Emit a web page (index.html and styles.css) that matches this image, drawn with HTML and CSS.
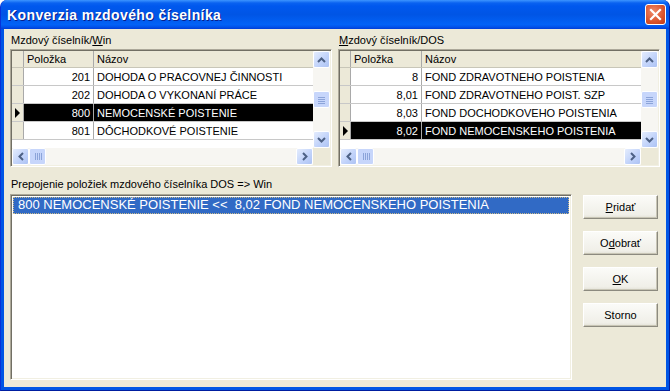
FILE: index.html
```html
<!DOCTYPE html>
<html>
<head>
    <meta charset="UTF-8">
    <title>Konverzia mzdového číselníka</title>
    <link rel="stylesheet" href="styles.css">
</head>
<body>
<div class="window">
    <div class="titlebar">
        <span class="title">Konverzia mzdového číselníka</span>
        <span class="close">
            <svg width="13" height="13" viewBox="0 0 13 13"><path d="M2 2 L11 11 M11 2 L2 11" stroke="#fff" stroke-width="2.2" stroke-linecap="square"/></svg>
        </span>
    </div>
    <div class="client">
        <div class="top">
            <div class="panel">
                <div class="label">Mzdový číselník/<u>W</u>in</div>
                <div class="grid left">
                    <table class="data">
                        <tr class="head"><td class="ind"></td><td class="num">Položka</td><td>Názov</td></tr>
                        <tr><td class="ind"></td><td class="num r">201</td><td>DOHODA O PRACOVNEJ ČINNOSTI</td></tr>
                        <tr><td class="ind"></td><td class="num r">202</td><td>DOHODA O VYKONANÍ PRÁCE</td></tr>
                        <tr class="sel"><td class="ind"><span class="arrow"></span></td><td class="num r">800</td><td>NEMOCENSKÉ POISTENIE</td></tr>
                        <tr><td class="ind"></td><td class="num r">801</td><td>DÔCHODKOVÉ POISTENIE</td></tr>
                    </table>
                    <div class="vscroll">
                        <span class="sbtn"><svg width="9" height="6" viewBox="0 0 9 6"><path d="M1 5 L4.5 1.5 L8 5" fill="none" stroke="#4d6185" stroke-width="2"/></svg></span>
                        <span class="track"><span class="thumb v"></span></span>
                        <span class="sbtn"><svg width="9" height="6" viewBox="0 0 9 6"><path d="M1 1 L4.5 4.5 L8 1" fill="none" stroke="#4d6185" stroke-width="2"/></svg></span>
                    </div>
                    <div class="hscroll">
                        <span class="sbtn"><svg width="6" height="9" viewBox="0 0 6 9"><path d="M5 1 L1.5 4.5 L5 8" fill="none" stroke="#4d6185" stroke-width="2"/></svg></span>
                        <span class="thumb h"></span>
                        <span class="track"></span>
                        <span class="sbtn"><svg width="6" height="9" viewBox="0 0 6 9"><path d="M1 1 L4.5 4.5 L1 8" fill="none" stroke="#4d6185" stroke-width="2"/></svg></span>
                    </div>
                    <div class="corner"></div>
                </div>
            </div>
            <div class="panel">
                <div class="label"><u>M</u>zdový číselník/DOS</div>
                <div class="grid right">
                    <table class="data">
                        <tr class="head"><td class="ind"></td><td class="num">Položka</td><td>Názov</td></tr>
                        <tr><td class="ind"></td><td class="num r">8</td><td>FOND ZDRAVOTNEHO POISTENIA</td></tr>
                        <tr><td class="ind"></td><td class="num r">8,01</td><td>FOND ZDRAVOTNEHO POIST. SZP</td></tr>
                        <tr><td class="ind"></td><td class="num r">8,03</td><td>FOND DOCHODKOVEHO POISTENIA</td></tr>
                        <tr class="sel"><td class="ind"><span class="arrow"></span></td><td class="num r">8,02</td><td>FOND NEMOCENSKEHO POISTENIA</td></tr>
                    </table>
                    <div class="vscroll">
                        <span class="sbtn"><svg width="9" height="6" viewBox="0 0 9 6"><path d="M1 5 L4.5 1.5 L8 5" fill="none" stroke="#4d6185" stroke-width="2"/></svg></span>
                        <span class="track"><span class="thumb v"></span></span>
                        <span class="sbtn"><svg width="9" height="6" viewBox="0 0 9 6"><path d="M1 1 L4.5 4.5 L8 1" fill="none" stroke="#4d6185" stroke-width="2"/></svg></span>
                    </div>
                    <div class="hscroll">
                        <span class="sbtn"><svg width="6" height="9" viewBox="0 0 6 9"><path d="M5 1 L1.5 4.5 L5 8" fill="none" stroke="#4d6185" stroke-width="2"/></svg></span>
                        <span class="thumb h"></span>
                        <span class="track"></span>
                        <span class="sbtn"><svg width="6" height="9" viewBox="0 0 6 9"><path d="M1 1 L4.5 4.5 L1 8" fill="none" stroke="#4d6185" stroke-width="2"/></svg></span>
                    </div>
                    <div class="corner"></div>
                </div>
            </div>
        </div>
        <div class="label lower">Prepojenie položiek mzdového číselníka DOS =&gt; Win</div>
        <div class="bottom">
            <div class="listbox">
                <div class="item selected">800 NEMOCENSKÉ POISTENIE &lt;&lt;&nbsp; 8,02 FOND NEMOCENSKEHO POISTENIA</div>
            </div>
            <div class="buttons">
                <button><u>P</u>ridať</button>
                <button>O<u>d</u>obrať</button>
                <button><u>O</u>K</button>
                <button>Storno</button>
            </div>
        </div>
    </div>
</div>
</body>
</html>
```

FILE: styles.css
```css
body {
    margin: 0;
    padding: 0;
    font-family: "Liberation Sans", Arial, sans-serif;
    font-size: 11px;
    color: #000;
}

.window {
    width: 670px;
    height: 391px;
    box-sizing: border-box;
    display: flex;
    flex-direction: column;
    background: #0055e5;
    border-left: 1px solid #0831d9;
    border-right: 1px solid #001ea0;
    border-bottom: 1px solid #001ea0;
    border-radius: 7px 7px 0 0;
    overflow: hidden;
}

.titlebar {
    height: 29px;
    flex: none;
    display: flex;
    align-items: center;
    justify-content: space-between;
    padding: 0 3px 0 6px;
    background: linear-gradient(#3d95ff 0, #0a62f0 3px, #0058ee 6px, #0055e5 50%, #0262f7 85%, #0152ea 93%, #003dd7 100%);
}

.title {
    color: #fff;
    font-weight: bold;
    font-size: 14px;
    text-shadow: 1px 1px #0a1e8a;
    letter-spacing: 0.4px;
}

.close {
    width: 19px;
    height: 19px;
    border: 1px solid #fff;
    border-radius: 3px;
    display: flex;
    align-items: center;
    justify-content: center;
    background: radial-gradient(circle at 40% 35%, #ef8b6c, #d9532c 60%, #c23a14);
}

.client {
    flex: 1;
    margin: 0 3px 3px 3px;
    background: #ece9d8;
    padding: 4px 6px 0 6px;
    display: flex;
    flex-direction: column;
}

.top {
    display: flex;
    gap: 6px;
}

.panel {
    flex: 1;
}

.label {
    height: 16px;
    line-height: 14px;
    padding-left: 1px;
}

.label.lower {
    margin-top: 10px;
}

.grid {
    height: 118px;
    box-sizing: border-box;
    border: 1px solid;
    border-color: #aca899 #fff #fff #aca899;
    box-shadow: inset 1px 1px #716f64, inset -1px -1px #f1efe2;
    padding: 1px;
    display: grid;
    grid-template-columns: 1fr 17px;
    grid-template-rows: 1fr 17px;
    background: #fff;
}

.data {
    border-collapse: collapse;
    align-self: start;
    width: 100%;
    table-layout: fixed;
}

.data td {
    height: 17px;
    padding: 0 3px;
    border-right: 1px solid #a9a9a9;
    border-bottom: 1px solid #c8c8c8;
    white-space: nowrap;
    overflow: hidden;
    line-height: 16px;
}

.data td:last-child {
    border-right: none;
}

.data .head td {
    background: #ece9d8;
    border-bottom: 1px solid #c8c6b8;
    height: 16px;
}

.data .ind {
    background: #ece9d8;
    padding: 0;
    position: relative;
}

.left .ind { width: 11px; }
.left .num { width: 63px; }
.right .ind { width: 10px; }
.right .num { width: 64px; }

.data .r {
    text-align: right;
}

.data .sel td:not(.ind) {
    background: #000;
    color: #fff;
}

.arrow {
    position: absolute;
    left: 3px;
    top: 4px;
    width: 0;
    height: 0;
    border-top: 5px solid transparent;
    border-bottom: 5px solid transparent;
    border-left: 5px solid #000;
}

.vscroll {
    display: flex;
    flex-direction: column;
    background: #f7f6f2;
}

.hscroll {
    display: flex;
    background: #f7f6f2;
}

.corner {
    background: #ece9d8;
}

.track {
    flex: 1;
    display: flex;
    align-items: center;
    justify-content: center;
}

.sbtn {
    flex: none;
    width: 15px;
    height: 15px;
    border: 1px solid #fff;
    border-radius: 2px;
    background: linear-gradient(135deg, #e4ecfd, #c0d2fa 60%, #aec3f3);
    display: flex;
    align-items: center;
    justify-content: center;
}

.thumb {
    border: 1px solid #fff;
    border-radius: 2px;
    box-sizing: border-box;
    background-color: #c7d6fb;
}

.thumb.v {
    width: 17px;
    height: 17px;
    background-image: repeating-linear-gradient(#c7d6fb 0 1px, #8ca4d9 1px 2px);
    background-size: 7px 8px;
    background-position: center;
    background-repeat: no-repeat;
}

.thumb.h {
    width: 17px;
    height: 17px;
    background-image: repeating-linear-gradient(90deg, #c7d6fb 0 1px, #8ca4d9 1px 2px);
    background-size: 8px 7px;
    background-position: center;
    background-repeat: no-repeat;
}

.bottom {
    display: flex;
    gap: 11px;
    margin-top: 1px;
}

.listbox {
    width: 562px;
    height: 186px;
    box-sizing: border-box;
    background: #fff;
    border: 1px solid;
    border-color: #aca899 #fff #fff #aca899;
    box-shadow: inset 1px 1px #716f64, inset -1px -1px #f1efe2;
    padding: 2px;
}

.item {
    height: 17px;
    line-height: 16px;
    font-size: 13px;
    padding-left: 5px;
    box-sizing: border-box;
}

.item.selected {
    background: #316ac5;
    color: #fff;
    outline: 1px dotted #c9b98a;
    outline-offset: -1px;
}

.buttons {
    display: flex;
    flex-direction: column;
    gap: 12px;
    margin-top: 1px;
}

.buttons button {
    width: 75px;
    height: 24px;
    font-family: "Liberation Sans", Arial, sans-serif;
    font-size: 11px;
    color: #000;
    background: linear-gradient(#fbfbf8, #f0efe8 85%, #e3e1d6);
    border: 1px solid;
    border-color: #fff #8c8a7f #8c8a7f #fff;
    box-shadow: inset -1px -1px #c8c5b5;
    padding: 0;
}
```
